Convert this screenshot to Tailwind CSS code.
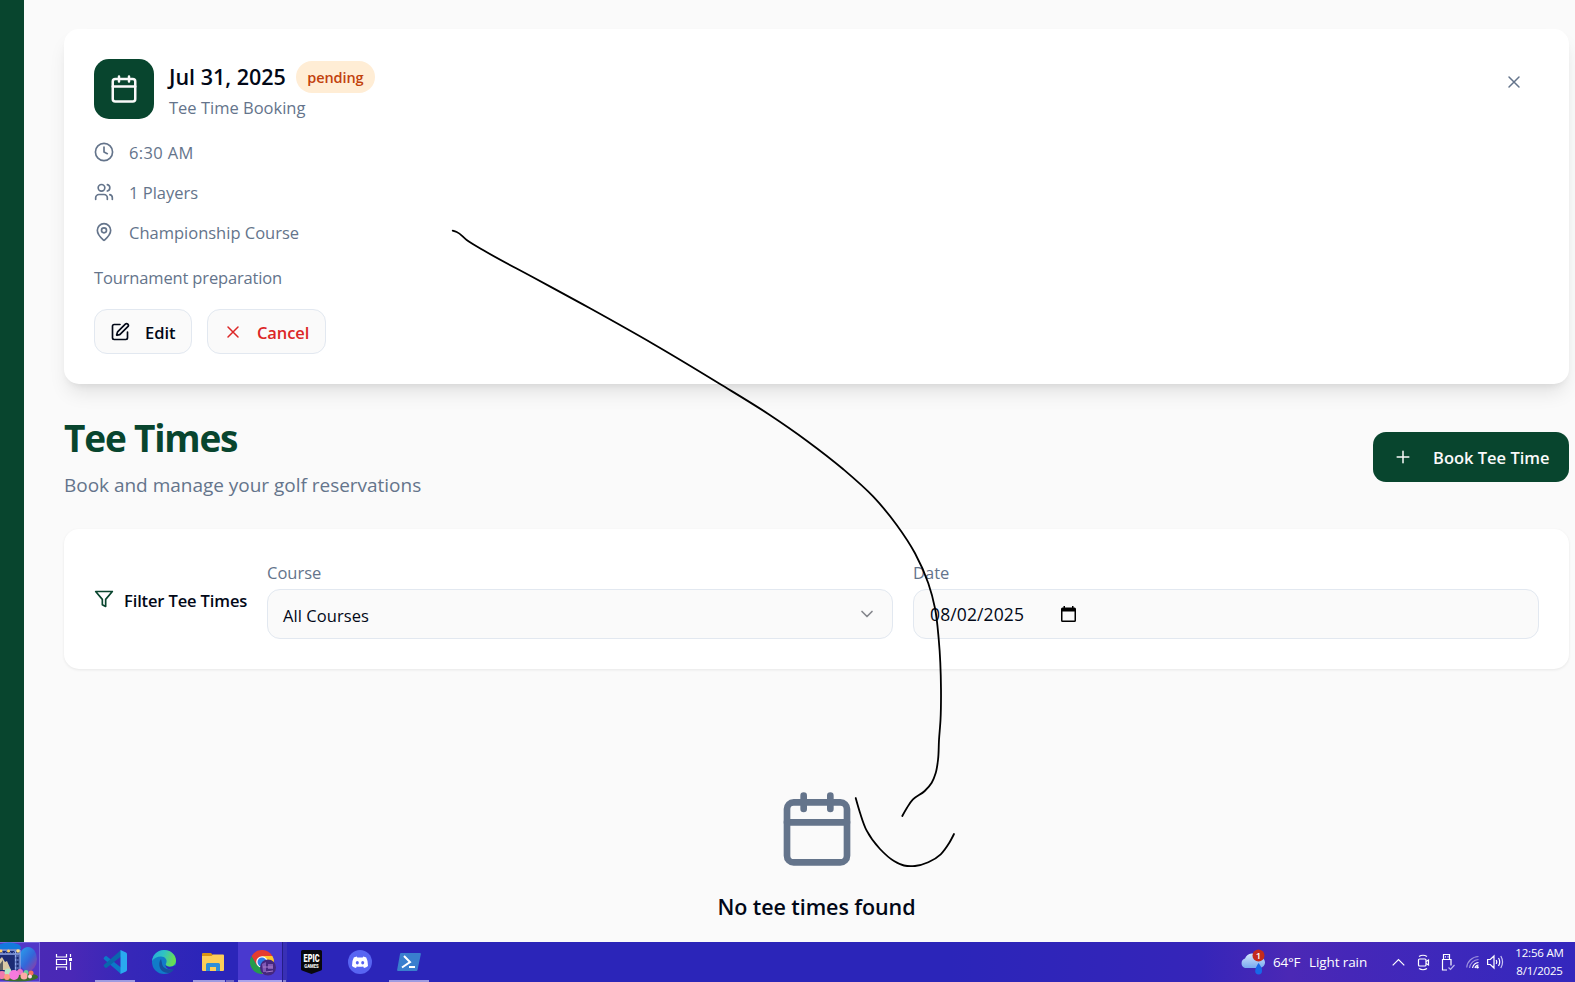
<!DOCTYPE html>
<html lang="en">
<head>
<meta charset="utf-8">
<title>Tee Times</title>
<script src="https://cdn.jsdelivr.net/npm/@tailwindcss/browser@4"></script>
</head>
<body class="h-[982px] w-[1575px] overflow-hidden bg-[#fafafa] font-['Open_Sans','Noto_Sans',sans-serif] text-[#020817]">
<div class="relative flex h-full flex-col">
  <div class="flex min-h-0 flex-1">
    <aside class="w-6 shrink-0 bg-[#08452e]"></aside>
    <main class="flex flex-1 flex-col pt-[29px] pr-[6px] pl-10">

      <!-- Booking card -->
      <section class="h-[355px] rounded-[15px] bg-white p-[30px] shadow-[0_12px_19px_-4px_rgba(0,0,0,0.1),0_5px_8px_-5px_rgba(0,0,0,0.1)]">
        <div class="flex items-start justify-between">
          <div class="flex items-center gap-[15px]">
            <div class="flex size-[60px] items-center justify-center rounded-[15px] bg-[#08452e] text-[#fafafa]">
              <svg class="size-[30px]" viewBox="0 0 24 24" fill="none" stroke="currentColor" stroke-width="2" stroke-linecap="round" stroke-linejoin="round"><path d="M8 2v4M16 2v4M3 10h18"/><rect x="3" y="4" width="18" height="18" rx="2"/></svg>
            </div>
            <div class="flex flex-col">
              <div class="flex h-8 items-center gap-[10px] pt-0.5">
                <h3 class="text-[21.5px] leading-8 font-semibold whitespace-nowrap">Jul 31, 2025</h3>
                <span class="flex h-8 w-[79px] items-center justify-center rounded-full bg-[#ffedd5] pt-px text-[14.500px] tracking-[-0.1px] font-semibold text-[#c2410c]">pending</span>
              </div>
              <p class="mt-[3px] -mb-0.5 text-[16.5px] leading-[25px] text-[#64748b]">Tee Time Booking</p>
            </div>
          </div>
          <button class="mt-[13px] mr-[15px] text-[#64748b]"><svg class="size-5" viewBox="0 0 24 24" fill="none" stroke="currentColor" stroke-width="1.800" stroke-linecap="round"><path d="M18 6 6 18M6 6l12 12"/></svg></button>
        </div>
        <div class="mt-5 flex flex-col gap-[15px] text-[16.5px] leading-[25px] text-[#64748b]">
          <div class="flex items-center gap-[15px]"><svg class="size-5" viewBox="0 0 24 24" fill="none" stroke="currentColor" stroke-width="2" stroke-linecap="round" stroke-linejoin="round"><circle cx="12" cy="12" r="10.300"/><path d="M12 6v6l4 2"/></svg><span class="h-[25px] pt-px tracking-[0.35px]">6:30 AM</span></div>
          <div class="flex items-center gap-[15px]"><svg class="size-5" viewBox="0 0 24 24" fill="none" stroke="currentColor" stroke-width="2" stroke-linecap="round" stroke-linejoin="round"><path d="M16 21v-2a4 4 0 0 0-4-4H6a4 4 0 0 0-4 4v2"/><circle cx="9" cy="7" r="4"/><path d="M22 21v-2a4 4 0 0 0-3-3.870M16 3.130a4 4 0 0 1 0 7.750"/></svg><span class="h-[25px] pt-px">1 Players</span></div>
          <div class="flex items-center gap-[15px]"><svg class="size-5" viewBox="0 0 24 24" fill="none" stroke="currentColor" stroke-width="2" stroke-linecap="round" stroke-linejoin="round"><path d="M20 10c0 4.993-5.539 10.193-7.399 11.799a1 1 0 0 1-1.202 0C9.539 20.193 4 14.993 4 10a8 8 0 0 1 16 0"/><circle cx="12" cy="10" r="3"/></svg><span class="h-[25px] pt-px">Championship Course</span></div>
        </div>
        <p class="mt-[21px] text-[16.5px] leading-[25px] tracking-[-0.15px] text-[#64748b]">Tournament preparation</p>
        <div class="mt-[19px] flex gap-[15px] text-[16.5px] font-semibold">
          <button class="flex h-[45px] w-[98px] items-center gap-[15px] rounded-[13px] border border-[#e2e8f0] bg-[#fafafa] pl-[15px]"><svg class="size-5" viewBox="0 0 24 24" fill="none" stroke="currentColor" stroke-width="2" stroke-linecap="round" stroke-linejoin="round"><path d="M12 3H5a2 2 0 0 0-2 2v14a2 2 0 0 0 2 2h14a2 2 0 0 0 2-2v-7"/><path d="M18.375 2.625a1 1 0 0 1 3 3l-9.013 9.014a2 2 0 0 1-.853.505l-2.873.84a.5.5 0 0 1-.62-.62l.84-2.873a2 2 0 0 1 .506-.852z"/></svg><span class="pt-[3px]">Edit</span></button>
          <button class="flex h-[45px] w-[119px] items-center gap-[15px] rounded-[13px] border border-[#e2e8f0] bg-[#fafafa] pl-[15px] text-[#dc2626]"><svg class="size-5" viewBox="0 0 24 24" fill="none" stroke="currentColor" stroke-width="1.800" stroke-linecap="round"><path d="M18 6 6 18M6 6l12 12"/></svg><span class="-ml-px pt-[3px] tracking-[-0.1px]">Cancel</span></button>
        </div>
      </section>

      <!-- Page heading -->
      <header class="mt-[30px] flex h-[85px] items-center justify-between">
        <div>
          <h1 class="pt-px text-[37px] leading-[45px] font-bold tracking-[-1.200px] text-[#08452e]">Tee Times</h1>
          <p class="mt-[10px] text-[19px] leading-[30px] tracking-[-0.02px] text-[#64748b]">Book and manage your golf reservations</p>
        </div>
        <button class="flex h-[50px] w-[196px] items-center gap-5 rounded-[13px] bg-[#08452e] pl-5 text-[16.5px] font-semibold text-[#fafafa]"><svg class="size-5" viewBox="0 0 24 24" fill="none" stroke="currentColor" stroke-width="1.800" stroke-linecap="round"><path d="M5 12h14M12 5v14"/></svg><span class="pt-[3px]">Book Tee Time</span></button>
      </header>

      <!-- Filters -->
      <section class="mt-[30px] flex h-[140px] items-center rounded-[15px] bg-white px-[30px] shadow-[0_1px_3px_rgba(0,0,0,0.08)]">
        <div class="flex w-[173px] items-center gap-[10px]"><svg class="size-5 text-[#08452e]" viewBox="0 0 24 24" fill="none" stroke="currentColor" stroke-width="2" stroke-linecap="round" stroke-linejoin="round"><path d="M22 3H2l8 9.460V19l4 2v-8.540z"/></svg><span class="pt-1 text-[16.5px] font-semibold tracking-[-0.13px]">Filter Tee Times</span></div>
        <div class="flex flex-1 gap-5 text-[16.5px]">
          <div class="flex flex-1 flex-col gap-[5px]">
            <label class="h-[25px] pt-px leading-[25px] text-[#64748b]">Course</label>
            <div class="flex h-[50px] items-center justify-between rounded-[13px] border border-[#e2e8f0] bg-[#fafafa] px-[15px]"><span class="pt-1 tracking-[0.06px]">All Courses</span><svg class="size-5 text-[#84868c]" viewBox="0 0 24 24" fill="none" stroke="currentColor" stroke-width="2" stroke-linecap="round" stroke-linejoin="round"><path d="m6 9 6 6 6-6"/></svg></div>
          </div>
          <div class="flex flex-1 flex-col gap-[5px]">
            <label class="h-[25px] pt-px leading-[25px] text-[#64748b]">Date</label>
            <div class="flex h-[50px] items-center gap-[36px] rounded-[13px] border border-[#e2e8f0] bg-[#fafafa] px-4"><span class="w-[95px] text-[17.500px] tracking-[0.12px]">08/02/2025</span><svg class="-mt-px h-4 w-[15px]" viewBox="0 0 15 16"><path fill="#000" fill-rule="evenodd" d="M2.500 0H4v1.500h7V0h1.500v1.500H13.500Q15 1.500 15 3V14.500Q15 16 13.500 16H1.500Q0 16 0 14.500V3Q0 1.500 1.500 1.500h1zM1.500 5.500v9h12v-9z"/></svg></div>
          </div>
        </div>
      </section>

      <!-- Empty state -->
      <section class="flex flex-col items-center pt-[120px]">
        <svg class="size-20 text-[#64748b]" viewBox="0 0 24 24" fill="none" stroke="currentColor" stroke-width="2" stroke-linecap="round" stroke-linejoin="round"><path d="M8 2v4M16 2v4M3 10h18"/><rect x="3" y="4" width="18" height="18" rx="2"/></svg>
        <h3 class="mt-5 text-[21.500px] leading-[35px] font-semibold tracking-[-0.08px]">No tee times found</h3>
      </section>
    </main>
  </div>

  <!-- Taskbar -->
  <footer class="flex h-10 shrink-0 items-stretch bg-[linear-gradient(90deg,#4a2bb4_0,#4a28b6_70px,#3627b8_130px,#2b25b9_210px,#2b25b9_950px,#3525b9_1200px,#4b28b5_1290px,#4527b8_1350px,#3d28bb_1450px,#3427bd_1575px)] text-white">
    <svg class="h-10 w-10 shrink-0" viewBox="0 0 40 40">
      <defs><linearGradient id="bl" x1="0" y1="0" x2="1" y2="1"><stop offset="0" stop-color="#28a5ee"/><stop offset=".55" stop-color="#3466d8"/><stop offset="1" stop-color="#a0359d"/></linearGradient></defs>
      <rect x="-1" y=".5" width="40.500" height="39" fill="#5237c9" stroke="#7565dc"/>
      <ellipse cx="9" cy="6" rx="12" ry="5.500" fill="#1479dd"/>
      <ellipse cx="28" cy="17" rx="9" ry="12" fill="url(#bl)"/>
      <path d="M0 7h20v23H0z" fill="#1b2b74"/>
      <path d="M0 8h20M0 12h20M15.500 8v22M20 8v22" stroke="#92a9e8" stroke-width="1.300"/>
      <path d="m15 12 5 4-5 4 5 4-5 4M20 12l-5 4 5 4-5 4 5 4M0 8l4 4 4-4 4 4 4-4" fill="none" stroke="#667fc9" stroke-width=".8"/>
      <circle cx="1" cy="9" r="1.500" fill="#ffd36b"/><circle cx="8.500" cy="9" r="1.500" fill="#ffd36b"/><circle cx="18" cy="9" r="1.800" fill="#ffe08b"/>
      <path d="m2 15 3 5 2-1 4 9H0V17z" fill="#d9c9a4"/><path d="m0 22 3-4v10H0z" fill="#5b6063"/>
      <ellipse cx="18" cy="35" rx="20" ry="4.500" fill="#396d2c"/>
      <circle cx="2" cy="33" r="4" fill="#f07bb0"/><circle cx="8" cy="30" r="3.500" fill="#b4e8c8"/><circle cx="20" cy="30" r="3" fill="#ee78c9"/><circle cx="26" cy="30.500" r="2.500" fill="#67cf9b"/><circle cx="31" cy="31" r="2.500" fill="#f3715d"/><circle cx="14" cy="33" r="5" fill="#f57adf"/><circle cx="24" cy="34" r="3.500" fill="#ffaaa5"/><circle cx="7" cy="35" r="3" fill="#ff9d82"/><circle cx="30" cy="34.500" r="2" fill="#ffd5eb"/>
    </svg>
    <div class="flex w-[50.500px] shrink-0 items-center pl-[15px]">
      <svg class="h-[18px] w-[18px]" viewBox="0 0 18 18" fill="none" stroke="#fff" stroke-width="1.200"><path d="M1.500 1v3h10V1M1.500 17v-3h10v3M1.500 6.500h10v5h-10zM15.500 1v3M15.500 9v8"/><path d="M14 5h3v3h-3z" fill="#fff" stroke="none"/></svg>
    </div>
    <div class="flex w-[49px] shrink-0 flex-col items-center justify-between">
      <svg class="mt-2 size-6" viewBox="0 0 24 24"><path d="M18 0v24L1 9.200q-.8-.8 0-1.600l1.300-1.300q.7-.5 1.400 0L18 17.500z" fill="#0b79c8"/><path d="M18 0v6.500L3.700 17.700q-.7.500-1.400 0L1 16.400q-.8-.8 0-1.600z" fill="#0a67ad"/><path d="m17.500 0 5.500 2.600q1 .5 1 1.600v15.600q0 1.100-1 1.600L17.500 24z" fill="#2aa9f0"/></svg>
      <div class="h-0.5 w-10 bg-[#9f9be0]"></div>
    </div>
    <div class="flex w-[49px] shrink-0 justify-center">
      <svg class="mt-2 size-6" viewBox="0 0 24 24"><defs><linearGradient id="eg" x1="0" y1="0" x2="1" y2=".3"><stop offset="0" stop-color="#26a9dc"/><stop offset=".5" stop-color="#2fc2c5"/><stop offset="1" stop-color="#68dc55"/></linearGradient></defs><circle cx="12" cy="12" r="12" fill="#117bc9"/><path d="M0 11C1 4 6 0 12 0c7 0 12 5 12 10.500 0 4-3 6-6 6-3.500 0-5-1.200-4-2.800C16 10 13 6.500 9 6.500c-4 0-7 1.500-9 4.500z" fill="url(#eg)"/><path d="M9 9c-4 5-1 14 7 14 3 0 5-2 6.500-4.500C16 21 10 18 10 13z" fill="#174f9e"/><path d="M13.500 14.500c1 2.500 5 3.500 9.500.8l2 2-2 2c-5 1-10-.5-9.500-4.800z" fill="#2f27b9"/></svg>
    </div>
    <div class="flex w-[49px] shrink-0 flex-col items-center justify-between">
      <svg class="mt-[11px] h-[18px] w-[22px]" viewBox="0 0 22 18"><path d="M0 1q0-1 1-1h8l2 2v3H0z" fill="#d99413"/><path d="M0 3h9.500L11 1.500h10q1 0 1 1V17q0 1-1 1H1q-1 0-1-1z" fill="#fdce58"/><path d="M4 11.500q0-1.500 1.500-1.500h11q1.500 0 1.500 1.500V18h-4v-4H8v4H4z" fill="#2d8fd9"/></svg>
      <div class="flex h-0.5 w-[42px] pl-px"><div class="w-8 bg-[#9f9be0]"></div><div class="ml-px flex-1 bg-[#716bc5]"></div></div>
    </div>
    <div class="flex w-[49px] shrink-0">
      <div class="flex w-[45px] flex-col items-center justify-between border-r border-[#241d88] bg-[#4939cf]">
        <svg class="mt-2 ml-[7px] h-[26px] w-[27px]" viewBox="0 0 27 26"><path d="M17.200 15 12 24A12 12 0 0 1 1.600 6l5.200 9z" fill="#259b4b"/><path d="M12 6h10.400A12 12 0 0 1 12 24l5.200-9z" fill="#fdc82f"/><path d="M1.600 6 6.800 15 12 12V6h10.400A12 12 0 0 0 1.600 6z" fill="#e43d30"/><circle cx="12" cy="12" r="5.800" fill="#fff"/><circle cx="12" cy="12" r="4.500" fill="#2a7de9"/><circle cx="18" cy="17.500" r="8" fill="#45277f"/><path d="m12 14 4-2v10h-3zM18 14h5v5h-5z" fill="#8058b5"/><path d="M13 17h10M16 22l7-1" stroke="#a87cc9"/></svg>
        <div class="h-0.5 w-full bg-[#aaa3ea]"></div>
      </div>
      <div class="flex w-1 items-end bg-[#3930b6]"><div class="h-0.5 w-[3px] bg-[#8983cf]"></div></div>
    </div>
    <div class="flex w-[49px] shrink-0 justify-center">
      <svg class="mt-2 h-6 w-[21px] overflow-visible" viewBox="0 0 21 24"><path d="M0 1.500Q0 0 1.500 0h18Q21 0 21 1.500V19q0 1.200-1 1.500L10.500 24 1 20.500Q0 20 0 19z" fill="#08080d"/><text x="10.500" y="12" fill="#fff" text-anchor="middle" font-family="Roboto" font-weight="900" font-size="11.500" textLength="16" lengthAdjust="spacingAndGlyphs">EPIC</text><text x="10.500" y="17.800" fill="#eee" text-anchor="middle" font-family="Roboto" font-weight="900" font-size="5" textLength="14.500" lengthAdjust="spacingAndGlyphs">GAMES</text></svg>
    </div>
    <div class="flex w-[49px] shrink-0 justify-center">
      <svg class="mt-2 size-6" viewBox="0 0 24 24"><circle cx="12" cy="12" r="12" fill="#5865f2"/><path d="M8.800 6.500q-2 .3-3 1Q4 10.500 4 16q1.500 1.500 4 1.900l.8-1.500q3.200.6 6.400 0l.8 1.500q2.500-.4 4-1.900 0-5.500-1.800-8.500-1-.7-3-1l-.5 1.100H9.300z" fill="#fff"/><ellipse cx="9.300" cy="12.700" rx="1.500" ry="1.700" fill="#5865f2"/><ellipse cx="14.700" cy="12.700" rx="1.500" ry="1.700" fill="#5865f2"/></svg>
    </div>
    <div class="flex w-[49px] shrink-0 flex-col items-center justify-between">
      <svg class="mt-[11px] h-[18px] w-6" viewBox="0 0 24 18"><path d="M4 0h19q1 0 .9 1L20.500 17q-.2 1-1.200 1H1q-1 0-.9-1L3 1q.2-1 1-1z" fill="#397fce"/><path d="m7 3 6 6-8 5.500M12 14h6" fill="none" stroke="#fff" stroke-width="2"/></svg>
      <div class="h-0.5 w-10 bg-[#9f9be0]"></div>
    </div>

    <div class="ml-auto flex items-center">
      <svg class="mr-2 h-[26px] w-[25px]" viewBox="0 0 25 26"><defs><linearGradient id="cl" x1="0" y1="0" x2="0" y2="1"><stop offset="0" stop-color="#d4e5fb"/><stop offset="1" stop-color="#78aaf0"/></linearGradient></defs><path d="M5 19a5 5 0 0 1 0-9.500A8 8 0 0 1 19 8a5.500 5.500 0 0 1 1 11z" fill="url(#cl)"/><path d="M18.500 14q4 5 3.500 8a3.400 3.400 0 0 1-6.800 0q0-3 3.300-8z" fill="#1768e8"/><circle cx="18.500" cy="6.500" r="6" fill="#c42b1c"/><text x="18.500" y="10" font-size="9.500" font-weight="600" text-anchor="middle" fill="#fff">1</text></svg>
      <span class="w-9 pt-px text-[13.500px] tracking-[-0.2px] whitespace-nowrap">64°F</span>
      <span class="w-[83px] pt-px text-[13.500px] tracking-[-0.1px] whitespace-nowrap">Light rain</span>
      <svg class="mr-3 h-2 w-[13px]" viewBox="0 0 13 8" fill="none" stroke="#fff" stroke-width="1.200"><path d="M.7 7.300 6.500 1.500l5.800 5.800"/></svg>
      <svg class="mr-[11px] h-[17px] w-[13px]" viewBox="0 0 13 17" fill="none" stroke="#fff" stroke-width="1.200"><rect x="1.500" y="5" width="7.500" height="7" rx="1"/><path d="m9 7.500 2.500-1.500v5L9 9.500M2 2.500Q6 0 10 2.500M2 14.500q4 2.500 8 0"/></svg>
      <svg class="mr-[11px] h-[17px] w-[14px]" viewBox="0 0 14 17" fill="none" stroke="#fff" stroke-width="1.200"><path d="M2.500 5.500v-5h6v5M6 16H1.500V5.500h8.500v6"/><path d="M4 2.800h1M6.500 2.800h1"/><path d="m7.500 13.500 2 2 4-4.500" stroke="#b9b4ef"/></svg>
      <svg class="mr-2 h-[14px] w-[13px]" viewBox="0 0 13 14" fill="none" stroke-width="1.200"><path d="M.7 12.500A12 12 0 0 1 12.500 1.500M3.500 13A9.500 9.500 0 0 1 12.500 4.500" stroke="#9d91de"/><path d="M6.500 13A7 7 0 0 1 12.500 7.500M9 13a4 4 0 0 1 3.500-3" stroke="#fff"/><circle cx="11.500" cy="12.300" r="1.200" fill="#fff"/></svg>
      <svg class="mr-[10px] h-4 w-[17px]" viewBox="0 0 17 16" fill="none" stroke="#fff" stroke-width="1.200"><path d="M.6 5.500h2.700L7 2v12l-3.700-3.500H.6zM9.200 6q1.300 2 0 4M11.500 4q2.500 4 0 8"/><path d="M13.800 2q3.500 6 0 12" stroke="#cbc6f5"/></svg>
      <div class="mr-[10px] flex w-[51px] flex-col items-center text-[11.500px] leading-[18px] tracking-[-0.2px] whitespace-nowrap"><span>12:56 AM</span><span>8/1/2025</span></div>
    </div>
  </footer>

  <!-- Freehand arrow over the page -->
  <svg class="pointer-events-none absolute inset-0 h-full w-full" viewBox="0 0 1575 982" fill="none" stroke="#000" stroke-width="1.800" stroke-linecap="round" stroke-linejoin="round">
    <path data-points="452.700,230.700 456.700,232 466.700,240 483,250 533,277.300 590,308.300 653.300,344 720,384 768.300,414 806.700,440.700 843.300,469.300 873.300,496.700 896.700,525 915,553.300 928.300,583.300 935,608.300 938.700,639 941,690 940.500,720 939,740 938,760 935.700,773 931.700,782.700 924.700,791 912.700,799.700 907,807.700 902.300,816"/>
    <path data-points="855.700,798 860,812.700 866.700,830.700 880,849 894,861 904,865.500 915,866 928.300,862.300 940.700,854.300 949,843.300 954,834"/>
  </svg>
</div>
<script>
  // Smooth each stroke through its sampled points; tangents are weighted by segment length.
  const tangent = (a, b, c) => {
    const l1 = Math.hypot(b[0] - a[0], b[1] - a[1]) || 1e-6, l2 = Math.hypot(c[0] - b[0], c[1] - b[1]) || 1e-6;
    const t = [0, 1].map(k => (b[k] - a[k]) / l1 * l2 + (c[k] - b[k]) / l2 * l1);
    const n = Math.hypot(...t);
    return n > 1e-5 ? t.map(v => v / n) : [0, 0];
  };
  document.querySelectorAll('path[data-points]').forEach(path => {
    const p = path.dataset.points.split(' ').map(s => s.split(',').map(Number));
    let d = `M${p[0]}`;
    for (let i = 0; i < p.length - 1; i++) {
      const b = p[i], c = p[i + 1];
      const len = Math.hypot(c[0] - b[0], c[1] - b[1]) / 3;
      const t1 = i > 0 ? tangent(p[i - 1], b, c) : [0, 0];
      const t2 = i < p.length - 2 ? tangent(b, c, p[i + 2]) : [0, 0];
      d += `C${b[0] + t1[0] * len},${b[1] + t1[1] * len} ${c[0] - t2[0] * len},${c[1] - t2[1] * len} ${c}`;
    }
    path.setAttribute('d', d);
  });
</script>
</body>
</html>
